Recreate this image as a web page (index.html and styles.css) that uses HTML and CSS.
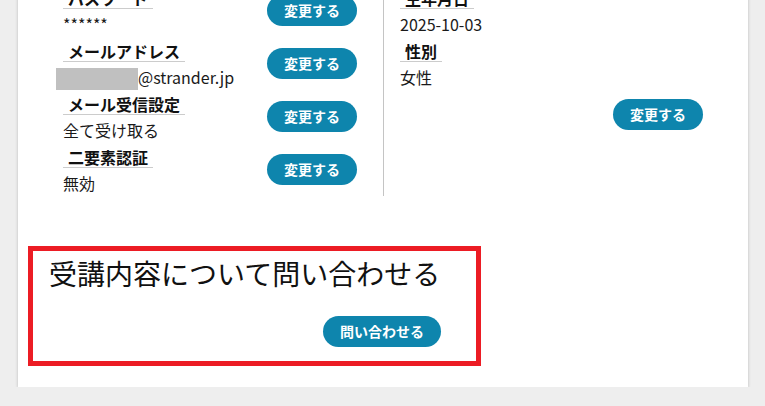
FILE: index.html
```html
<!DOCTYPE html>
<html lang="ja">
<head>
<meta charset="utf-8">
<link rel="stylesheet" href="styles.css">
</head>
<body>
<div class="card">
  <div class="profile">
    <div class="col col-left">
      <div class="row">
        <div class="info">
          <div class="label">パスワード</div>
          <div class="value">******</div>
        </div>
        <button class="btn">変更する</button>
      </div>
      <div class="row">
        <div class="info">
          <div class="label">メールアドレス</div>
          <div class="value"><span class="mask"></span>@strander.jp</div>
        </div>
        <button class="btn">変更する</button>
      </div>
      <div class="row">
        <div class="info">
          <div class="label">メール受信設定</div>
          <div class="value">全て受け取る</div>
        </div>
        <button class="btn">変更する</button>
      </div>
      <div class="row">
        <div class="info">
          <div class="label">二要素認証</div>
          <div class="value">無効</div>
        </div>
        <button class="btn">変更する</button>
      </div>
    </div>
    <div class="col col-right">
      <div class="row">
        <div class="info">
          <div class="label">生年月日</div>
          <div class="value">2025-10-03</div>
        </div>
      </div>
      <div class="row">
        <div class="info">
          <div class="label">性別</div>
          <div class="value">女性</div>
        </div>
      </div>
      <div class="actions">
        <button class="btn">変更する</button>
      </div>
    </div>
  </div>
  <div class="inquiry">
    <h2 class="inquiry-title">受講内容について問い合わせる</h2>
    <div class="inquiry-actions">
      <button class="btn">問い合わせる</button>
    </div>
  </div>
</div>
</body>
</html>
```
FILE: styles.css
```css
html, body {
  margin: 0;
  padding: 0;
  background: #eeeeee;
  font-family: "Noto Sans CJK JP", "Noto Sans", sans-serif;
  color: #1a1a1a;
}

.card {
  width: 730px;
  margin: -39px 0 0 18px;
  padding: 27px 0 21px;
  background: #ffffff;
  box-shadow: 0 1px 3px rgba(0, 0, 0, 0.22);
  box-sizing: border-box;
}

.profile {
  display: grid;
  grid-template-columns: 321px 1fr;
  padding: 0 45px;
}

.col-left {
  border-right: 1px solid #c4c4c4;
  padding-right: 26px;
}

.col-right {
  padding-left: 16px;
}

.row {
  display: flex;
  align-items: flex-start;
  justify-content: space-between;
  margin-bottom: 4px;
}

.row .btn {
  margin-top: 7px;
}

.col .row:last-child {
  margin-bottom: 0;
}

.label {
  display: block;
  width: fit-content;
  font-size: 16px;
  font-weight: 700;
  line-height: 20px;
  padding: 0 5px;
  border-bottom: 1px solid #cccccc;
  color: #111;
}

.value {
  font-size: 16px;
  line-height: 26px;
  margin-top: 2px;
  color: #1a1a1a;
}

.mask {
  display: inline-block;
  width: 82px;
  height: 22px;
  margin-left: -7px;
  background: #c0c0c0;
  vertical-align: bottom;
}

.btn {
  display: block;
  height: 31px;
  padding: 0 17px;
  border: none;
  border-radius: 16px;
  background: #0e85ad;
  color: #ffffff;
  font-family: "Noto Sans CJK JP", "Noto Sans", sans-serif;
  font-size: 14px;
  font-weight: 700;
  line-height: 31px;
  white-space: nowrap;
}

.actions {
  display: flex;
  justify-content: flex-end;
  margin-top: 9px;
}

.inquiry {
  width: 453px;
  margin: 50px 0 0 10px;
  border: 5px solid #ec1c24;
  padding: 2px 35px 14px 16px;
  box-sizing: border-box;
}

.inquiry-title {
  margin: 0;
  font-size: 28px;
  font-weight: 400;
  line-height: 40px;
  color: #111;
}

.inquiry-actions {
  display: flex;
  justify-content: flex-end;
  margin-top: 23px;
}
```
